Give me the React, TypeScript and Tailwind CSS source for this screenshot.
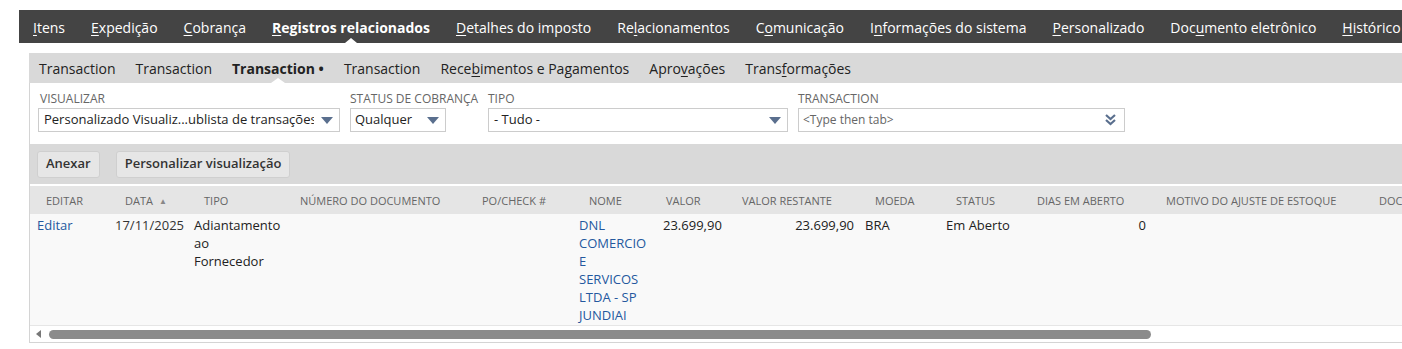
import React from 'react';

const topTabs: { pre: string; key: string; post: string; active?: boolean }[] = [
  { pre: '', key: 'I', post: 'tens' },
  { pre: '', key: 'E', post: 'xpedição' },
  { pre: '', key: 'C', post: 'obrança' },
  { pre: '', key: 'R', post: 'egistros relacionados', active: true },
  { pre: '', key: 'D', post: 'etalhes do imposto' },
  { pre: 'Re', key: 'l', post: 'acionamentos' },
  { pre: 'C', key: 'o', post: 'municação' },
  { pre: 'I', key: 'n', post: 'formações do sistema' },
  { pre: '', key: 'P', post: 'ersonalizado' },
  { pre: 'Doc', key: 'u', post: 'mento eletrônico' },
  { pre: '', key: 'H', post: 'istórico' },
];

const subTabs: { pre: string; key?: string; post?: string; active?: boolean }[] = [
  { pre: 'Transaction' },
  { pre: 'Transaction' },
  { pre: 'Transaction', active: true },
  { pre: 'Transaction' },
  { pre: 'Rece', key: 'b', post: 'imentos e Pagamentos' },
  { pre: 'Apro', key: 'v', post: 'ações' },
  { pre: 'Trans', key: 'f', post: 'ormações' },
];

const columns = [
  { label: 'Editar', cls: 'w-[78px] pl-[16px]' },
  { label: 'Data', cls: 'w-[79px] pl-[17px]', sort: true },
  { label: 'Tipo', cls: 'w-[96px] pl-[17px]' },
  { label: 'Número do documento', cls: 'w-[182px] pl-[17px]' },
  { label: 'PO/Check #', cls: 'w-[107px] pl-[17px]' },
  { label: 'Nome', cls: 'w-[84px] pl-[17px]' },
  { label: 'Valor', cls: 'w-[76px] pl-[10px]' },
  { label: 'Valor restante', cls: 'w-[126px] pl-[10px]' },
  { label: 'Moeda', cls: 'w-[81px] pl-[17px]' },
  { label: 'Status', cls: 'w-[88px] pl-[17px]' },
  { label: 'Dias em aberto', cls: 'w-[126px] pl-[10px]' },
  { label: 'Motivo do ajuste de estoque', cls: 'w-[213px] pl-[13px]' },
  { label: 'Doc', cls: 'w-[200px] pl-[13px]' },
];

const Arrow = () => (
  <svg width="12" height="7" viewBox="0 0 12 7" className="shrink-0">
    <path d="M0 0 H12 L6 7 Z" fill="#5a6f8e" />
  </svg>
);

const DoubleChevron = () => (
  <svg width="11" height="12" viewBox="0 0 11 12" className="shrink-0">
    <path d="M1 1 L5.5 5 L10 1" stroke="#5a6f8e" strokeWidth="2.2" fill="none" />
    <path d="M1 6 L5.5 10 L10 6" stroke="#5a6f8e" strokeWidth="2.2" fill="none" />
  </svg>
);

const App: React.FC = () => {
  return (
    <div className="w-full h-[349px] bg-white overflow-hidden font-['Open_Sans',sans-serif] whitespace-nowrap">
      {/* main tabs */}
      <div className="pt-[10px] pl-[19px]">
        <div className="h-[33px] bg-[#444444] flex items-center pl-[1px] pt-[1px] text-white text-[14px]">
          {topTabs.map((t, i) => (
            <div key={i} className={`relative h-full flex items-center px-[13px] ${t.active ? 'font-bold' : ''}`}>
              <span>
                {t.pre}
                <span className="underline underline-offset-2">{t.key}</span>
                {t.post}
              </span>
              {t.active && (
                <span className="absolute bottom-0 left-1/2 -translate-x-1/2 w-0 h-0 border-l-[6px] border-r-[6px] border-b-[5px] border-l-transparent border-r-transparent border-b-white" />
              )}
            </div>
          ))}
        </div>
      </div>

      <div className="mt-[10px] ml-[29px]">
        {/* sub tabs */}
        <div className="h-[30px] bg-[#d9d9d9] flex items-center text-[14px] text-[#222]">
          {subTabs.map((t, i) => (
            <div key={i} className={`relative h-full flex items-center px-[10px] ${t.active ? 'font-bold' : ''}`}>
              <span>
                {t.pre}
                {t.key && <span className="underline underline-offset-2">{t.key}</span>}
                {t.post}
                {t.active && <span className="font-bold"> •</span>}
              </span>
              {t.active && (
                <span className="absolute bottom-0 left-1/2 -translate-x-1/2 w-0 h-0 border-l-[7px] border-r-[7px] border-b-[5px] border-l-transparent border-r-transparent border-b-white" />
              )}
            </div>
          ))}
        </div>

        <div className="border-l border-b border-[#d4d4d4]">
          {/* filters */}
          <div className="flex gap-[10px] pl-[8px] pt-[8px] pb-[12px]">
            <div className="w-[302px]">
              <div className="pl-[2px] text-[12px] leading-[16px] text-[#666] uppercase">Visualizar</div>
              <div className="mt-[1px] h-[24px] border border-[#cccccc] bg-white flex items-center pl-[5px] pr-[6px] text-[13px] text-[#222]">
                <span className="w-[270px] overflow-hidden">Personalizado Visualiz...ublista de transações</span>
                <span className="ml-auto"><Arrow /></span>
              </div>
            </div>
            <div className="w-[128px]">
              <div className="text-[12px] leading-[16px] text-[#666] uppercase">Status de cobrança</div>
              <div className="mt-[1px] w-[96px] h-[24px] border border-[#cccccc] bg-white flex items-center pl-[4px] pr-[6px] text-[13px] text-[#222]">
                <span>Qualquer</span>
                <span className="ml-auto"><Arrow /></span>
              </div>
            </div>
            <div className="w-[300px]">
              <div className="text-[12px] leading-[16px] text-[#666] uppercase">Tipo</div>
              <div className="mt-[1px] h-[24px] border border-[#cccccc] bg-white flex items-center pl-[5px] pr-[6px] text-[13px] text-[#222]">
                <span>- Tudo -</span>
                <span className="ml-auto"><Arrow /></span>
              </div>
            </div>
            <div className="w-[327px]">
              <div className="text-[12px] leading-[16px] text-[#666] uppercase">Transaction</div>
              <div className="mt-[1px] h-[24px] border border-[#cccccc] bg-white flex items-center pl-[4px] pr-[8px] text-[12px] text-[#666]">
                <span>&lt;Type then tab&gt;</span>
                <span className="ml-auto"><DoubleChevron /></span>
              </div>
            </div>
          </div>

          {/* actions */}
          <div className="h-[40px] bg-[#d9d9d9] flex items-center pl-[7px] gap-[16px]">
            <button className="h-[27px] px-[8px] rounded-[3px] border border-[#cfcfcf] bg-[#e6e6e6] text-[13px] font-semibold text-[#333]">
              Anexar
            </button>
            <button className="h-[27px] px-[8px] rounded-[3px] border border-[#cfcfcf] bg-[#e6e6e6] text-[13px] font-semibold text-[#333]">
              Personalizar visualização
            </button>
          </div>

          {/* table */}
          <div className="mt-[2px] overflow-hidden">
            <div className="flex h-[28px] pt-[2px] items-center bg-[#e5e5e5] text-[11px] text-[#666] uppercase">
              {columns.map((c, i) => (
                <div key={i} className={`shrink-0 ${c.cls}`}>
                  {c.label}
                  {c.sort && <span className="ml-[6px] text-[8px] text-[#888] align-[1px]">▲</span>}
                </div>
              ))}
            </div>
            <div className="flex h-[112px] bg-[#f9f9f9] border-b border-[#e6e6e6] pt-[2px] text-[13px] leading-[18px] text-[#222]">
              <div className="shrink-0 w-[78px] pl-[7px] text-[#24589e]">Editar</div>
              <div className="shrink-0 w-[79px] pl-[7px] text-[#333]">17/11/2025</div>
              <div className="shrink-0 w-[96px] pl-[7px]">
                <div>Adiantamento</div>
                <div>ao</div>
                <div>Fornecedor</div>
              </div>
              <div className="shrink-0 w-[182px]" />
              <div className="shrink-0 w-[107px]" />
              <div className="shrink-0 w-[84px] pl-[7px] text-[#24589e]">
                <div>DNL</div>
                <div>COMERCIO</div>
                <div>E</div>
                <div>SERVICOS</div>
                <div>LTDA - SP</div>
                <div>JUNDIAI</div>
              </div>
              <div className="shrink-0 w-[76px] pl-[7px]">23.699,90</div>
              <div className="shrink-0 w-[126px] pr-[4px] text-right">23.699,90</div>
              <div className="shrink-0 w-[81px] pl-[7px]">BRA</div>
              <div className="shrink-0 w-[88px] pl-[7px]">Em Aberto</div>
              <div className="shrink-0 w-[126px] pr-[7px] text-right">0</div>
              <div className="shrink-0 w-[213px]" />
              <div className="shrink-0 w-[200px]" />
            </div>
            {/* horizontal scrollbar */}
            <div className="h-[16px] bg-white flex items-center pl-[6px]">
              <span className="w-0 h-0 border-t-[4px] border-b-[4px] border-r-[5px] border-t-transparent border-b-transparent border-r-[#777]" />
              <div className="ml-[8px] h-[9px] w-[1102px] rounded-full bg-[#8b8b8b]" />
            </div>
          </div>
        </div>
      </div>
    </div>
  );
};

export default App;
